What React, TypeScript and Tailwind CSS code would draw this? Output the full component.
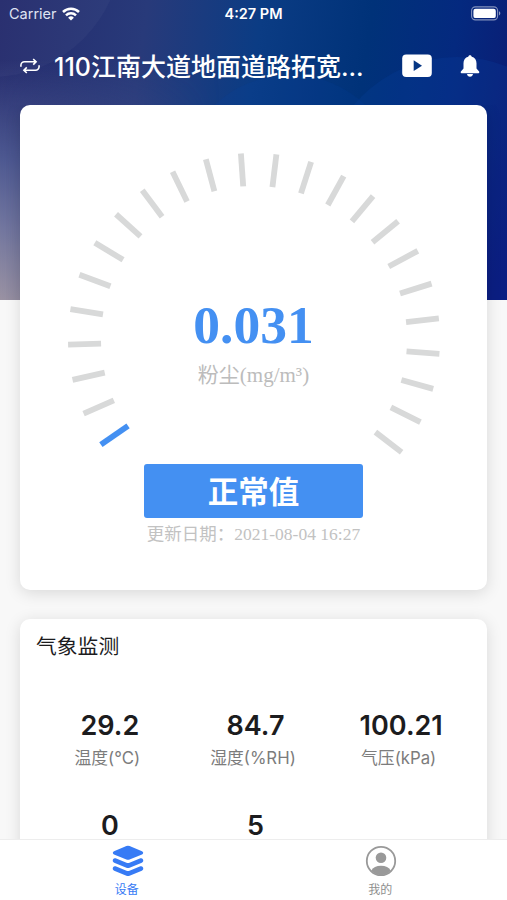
import type {ReactNode} from "react"

const TICK_COUNT = 24
const TICK_START = -124.6
const TICK_STEP = 10.96

const READINGS = [
	{value: "29.2", label: "温度(°C)"},
	{value: "84.7", label: "湿度(%RH)"},
	{value: "100.21", label: "气压(kPa)"},
	{value: "0"},
	{value: "5"},
]

const WifiIcon = () => (
	<svg width="18" height="14" viewBox="0 0 18 14" fill="none" stroke="white" strokeWidth="2.5">
		<path d="M1 5a11.4 11.4 0 0 1 16 0" />
		<path d="M4 8.3a7.2 7.2 0 0 1 10 0" />
		<path d="M9 13.6 6.1 10.7a4.1 4.1 0 0 1 5.8 0z" fill="white" stroke="none" />
	</svg>
)

const BatteryIcon = () => (
	<svg width="30" height="15" viewBox="0 0 30 15" fill="none">
		<rect x="0.6" y="0.9" width="26" height="13" rx="3.8" stroke="white" strokeOpacity="0.5" strokeWidth="1.1" />
		<rect x="2.4" y="2.7" width="22.4" height="9.4" rx="2.2" fill="white" />
		<path d="M28 5.3c1.8.7 1.8 3.5 0 4.2z" fill="white" fillOpacity="0.55" />
	</svg>
)

const SwapIcon = () => (
	<svg width="22" height="18" viewBox="0 0 22 18" fill="none" stroke="white" strokeWidth="1.6">
		<path d="M1.9 9.8V8.4a3.6 3.6 0 0 1 3.6-3.6h11.2M14.2 2l2.9 2.8-2.9 2.8" />
		<path d="M20.1 8.2v1.4a3.6 3.6 0 0 1-3.6 3.6H5.3M7.8 10.4 4.9 13.2 7.8 16" />
	</svg>
)

const VideoIcon = () => (
	<svg width="30" height="24" viewBox="0 0 30 24">
		<rect x="0.2" y="0.4" width="29.6" height="22.6" rx="4" fill="white" />
		<path d="M11.7 6.3v10.8l8.3-5.4z" fill="#053684" />
	</svg>
)

const BellIcon = () => (
	<svg width="20" height="22" viewBox="0 0 20 22" fill="white">
		<path d="M10 .2c-1 0-1.7.7-1.7 1.6C5.2 2.5 3.5 5 3.5 8.2v5.2L.9 16.6c-.5.7-.2 1.6.6 1.6h17c.8 0 1.1-.9.6-1.6l-2.6-3.2V8.2c0-3.2-1.7-5.7-4.8-6.4C11.7.9 11 .2 10 .2z" />
		<path d="M7 19.1h6c-.2 1.6-1.4 2.6-3 2.6s-2.8-1-3-2.6z" />
	</svg>
)

const LayersIcon = () => (
	<svg width="32" height="32" viewBox="0 0 32 32" fill="#377bf5">
		<path d="M14.4 1a5 5 0 0 1 3.2 0L30 6.3c1.6.7 1.6 2.5 0 3.2l-12.4 5a5 5 0 0 1-3.2 0L2 9.5c-1.6-.7-1.6-2.5 0-3.2z" />
		<path d="M3.6 13.3 14.5 17.8a4.4 4.4 0 0 0 3 0l10.9-4.5c2.9-.9 4 3.4 1.4 4.5l-12.2 4.9a4.4 4.4 0 0 1-3.2 0L2.2 17.8c-2.6-1.1-1.5-5.4 1.4-4.5z" />
		<path d="M3.6 21.3 14.5 25.8a4.4 4.4 0 0 0 3 0l10.9-4.5c2.9-.9 4 3.4 1.4 4.5l-12.2 4.9a4.4 4.4 0 0 1-3.2 0L2.2 25.8c-2.6-1.1-1.5-5.4 1.4-4.5z" />
	</svg>
)

const UserIcon = () => (
	<svg width="32" height="32" viewBox="0 0 32 32" fill="#999">
		<circle cx="16" cy="16" r="14.2" fill="none" stroke="#999" strokeWidth="1.8" />
		<circle cx="16" cy="12.8" r="5.3" />
		<path d="M6.2 25.8c1.6-3.2 5.2-5 9.8-5s8.2 1.8 9.8 5A14.2 14.2 0 0 1 16 30.2a14.2 14.2 0 0 1-9.8-4.4z" />
	</svg>
)

const Gauge = () => (
	<svg width="380" height="320" viewBox="-190 -190 380 320" className="col-start-1 row-start-1">
		{Array.from({length: TICK_COUNT}, (_, index) => (
			<line
				key={index}
				y1={-186}
				y2={-153}
				stroke={index === 0 ? "#4490f2" : "#d8d9d9"}
				strokeWidth={5.8}
				transform={`rotate(${TICK_START + index * TICK_STEP})`}
			/>
		))}
	</svg>
)

const Backdrop = () => (
	<div className="absolute inset-x-0 top-0 h-[300px] overflow-hidden bg-[linear-gradient(98deg,#242a6c_0%,#283a7a_27%,#0b3c84_48%,#003279_68%,#04297f_84%,#0d1a72_100%)]">
		<div className="absolute left-0 top-[60px] h-[240px] w-[220px] bg-[linear-gradient(to_bottom,transparent,#4f5a92_42%,#73779f_70%,#9b93a3)] [mask-image:linear-gradient(to_right,black,transparent)]" />
		<div className="absolute right-0 top-[100px] h-[200px] w-[60px] bg-[linear-gradient(to_bottom,transparent,#0c1478)]" />
		<div className="absolute -left-[140px] -top-[185px] h-[262px] w-[262px] rounded-full bg-white/3" />
		<div className="absolute left-[322px] top-[57px] h-[270px] w-[270px] rounded-full bg-[#0846a8]/20" />
		<div className="absolute left-[180px] top-[75px] h-[220px] w-[220px] rounded-full bg-[#0846a8]/15" />
	</div>
)

type TabProps = {
	icon: ReactNode
	label: string
	color: string
}

const Tab = ({icon, label, color}: TabProps) => (
	<button className={`flex flex-1 flex-col items-center pl-[2px] pt-[5px] text-[12px] leading-4 ${color}`}>
		{icon}
		<span className="mr-[2px] mt-[5px]">{label}</span>
	</button>
)

const App = () => {
	return (
		<div className="relative flex h-[900px] w-full flex-col overflow-hidden bg-[#f8f8f8] font-[Inter,'Noto_Sans_CJK_SC',sans-serif]">
			<Backdrop />

			<div className="relative grid h-[27px] shrink-0 grid-cols-3 items-center pl-[9px] pr-[6px] text-[14.5px] text-white">
				<div className="flex items-center gap-[5px] text-[#dfe3f2]">
					<span>Carrier</span>
					<WifiIcon />
				</div>
				<span className="-ml-[3px] text-center font-semibold">4:27 PM</span>
				<div className="flex justify-end">
					<BatteryIcon />
				</div>
			</div>

			<header className="relative flex h-[78px] shrink-0 items-center pl-[19px] pr-[27px] text-white">
				<SwapIcon />
				<h1 className="ml-[13px] mt-[3px] w-[340px] whitespace-nowrap text-[25px] font-medium leading-none">
					110江南大道地面道路拓宽...
				</h1>
				<div className="ml-auto flex items-center gap-[28px]">
					<VideoIcon />
					<BellIcon />
				</div>
			</header>

			<main className="relative flex min-h-0 flex-1 flex-col gap-[29px] overflow-hidden px-[20px]">
				<section className="flex h-[485px] shrink-0 flex-col items-center rounded-[10px] bg-white pt-[44px] shadow-[0_3px_16px_rgba(0,0,0,0.13)]">
					<div className="grid h-[315px] justify-items-center font-['Liberation_Serif','Noto_Sans_CJK_SC',serif]">
						<Gauge />
						<div className="col-start-1 row-start-1 flex flex-col items-center pt-[148px]">
							<span className="text-[53.5px] font-bold leading-[56px] text-[#4490f2]">0.031</span>
							<span className="mt-[7px] text-[21px] leading-[30px] text-[#bcbcbc]">粉尘(mg/m³)</span>
						</div>
					</div>
					<div className="flex h-[54px] w-[219px] shrink-0 items-center justify-center rounded-[3px] bg-[#4490f2] pt-[3px] text-[30.5px] font-bold leading-none text-white">
						正常值
					</div>
					<p className="mt-[4px] whitespace-nowrap font-['Liberation_Serif','Noto_Sans_CJK_SC',serif] text-[17.5px] leading-6 text-[#c2c2c2]">
						更新日期：2021-08-04 16:27
					</p>
				</section>

				<section className="h-[360px] shrink-0 rounded-[10px] bg-white pt-[13px] shadow-[0_3px_16px_rgba(0,0,0,0.13)]">
					<h2 className="pl-[16px] text-[20.8px] leading-[30px] text-[#1c1c1e]">气象监测</h2>
					<div className="mt-[51px] grid grid-cols-3 gap-y-[42px] pl-[17px] pr-[13px]">
						{READINGS.map(({value, label}) => (
							<div key={value} className="flex flex-col items-center">
								<span className="text-[27px] font-semibold leading-[26px] text-[#1c1c1e]">{value}</span>
								{label && <span className="mr-[5px] mt-[7px] text-[16.8px] leading-[25px] text-[#7c7c7c]">{label}</span>}
							</div>
						))}
					</div>
				</section>
			</main>

			<nav className="relative flex h-[61px] shrink-0 border-t border-[#ededed] bg-white">
				<Tab icon={<LayersIcon />} label="设备" color="text-[#377bf5]" />
				<Tab icon={<UserIcon />} label="我的" color="text-[#8e8e8e]" />
			</nav>
		</div>
	)
}

export default App
